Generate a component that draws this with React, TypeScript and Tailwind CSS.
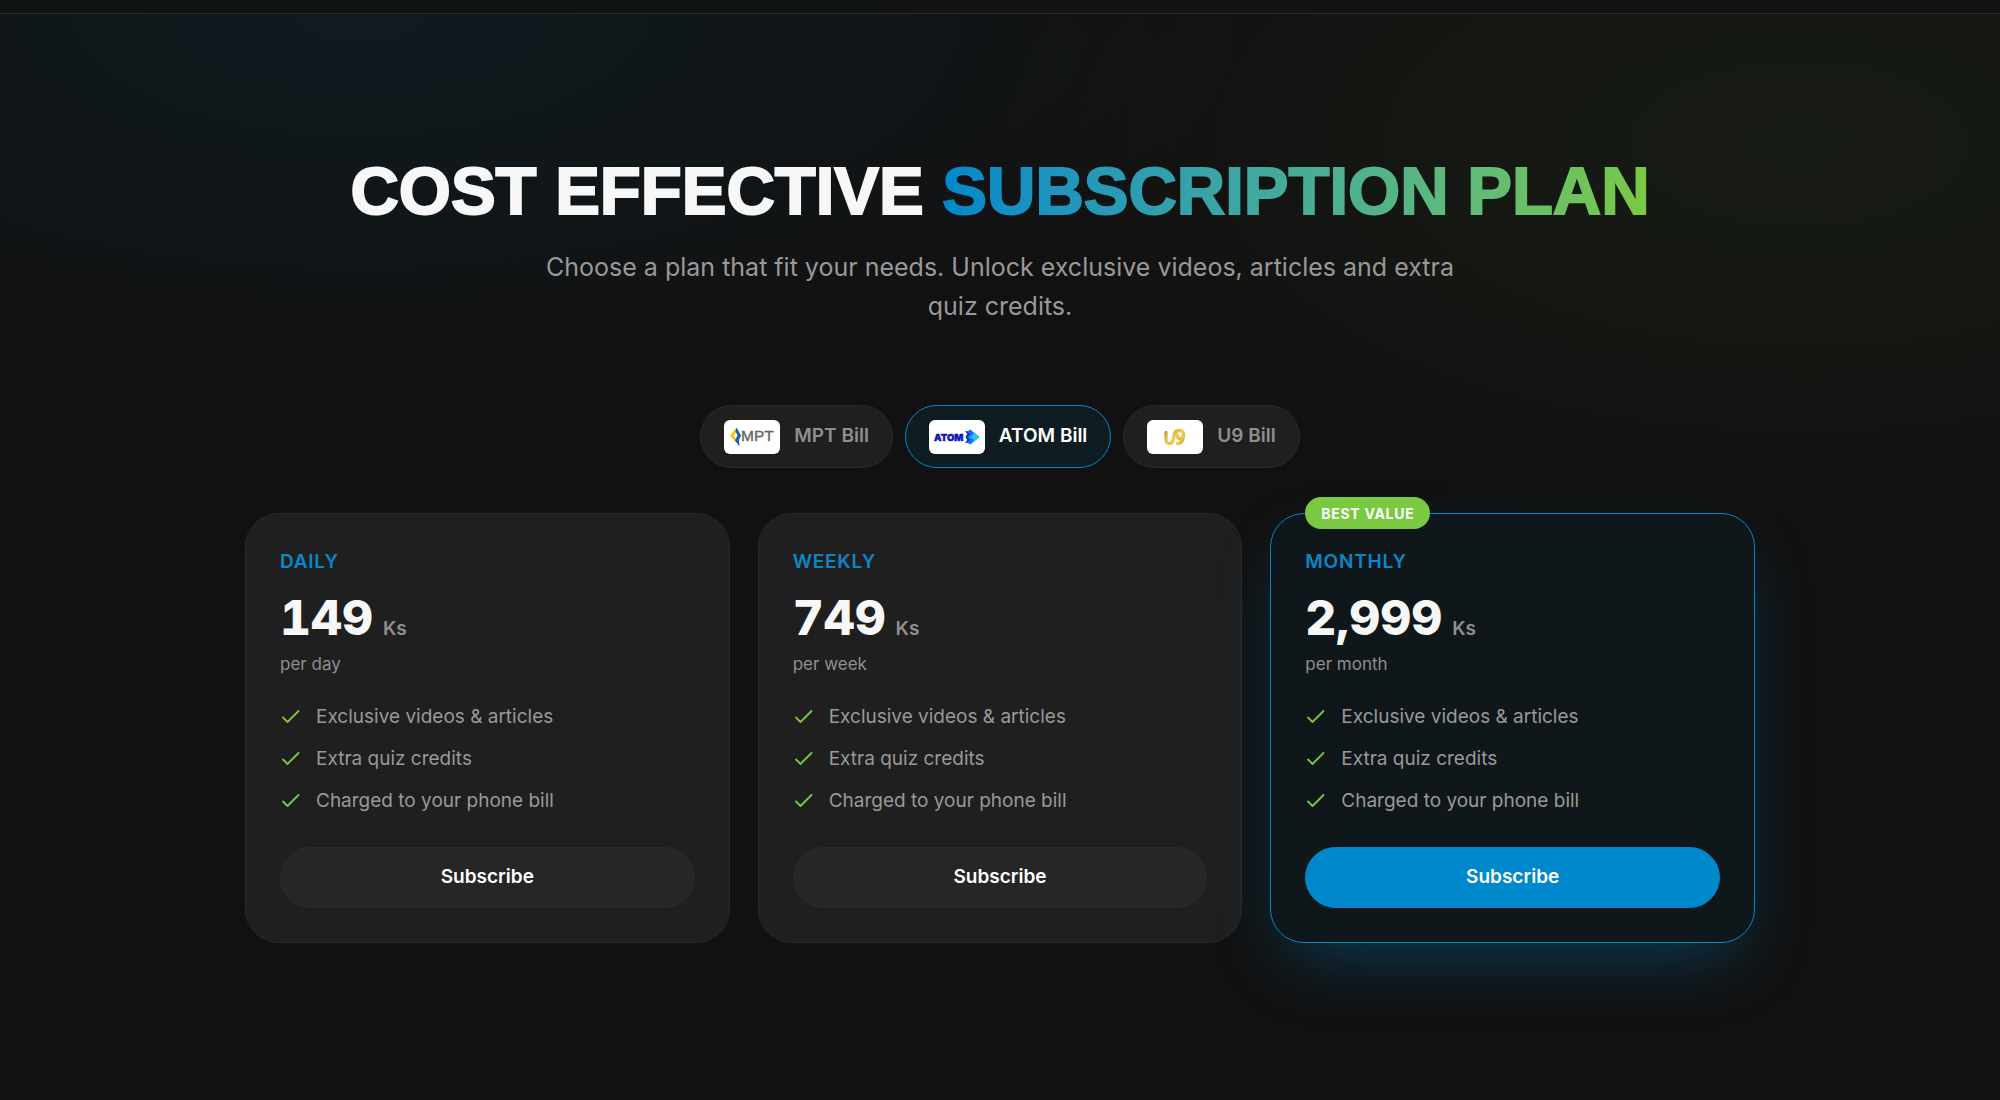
import React, { useState } from 'react';

const FEATURES = ['Exclusive videos & articles', 'Extra quiz credits', 'Charged to your phone bill'];

const PLANS = [
  { name: 'Daily', price: '149', period: 'per day', best: false },
  { name: 'Weekly', price: '749', period: 'per week', best: false },
  { name: 'Monthly', price: '2,999', period: 'per month', best: true },
];

const MptLogo = () => (
  <svg viewBox="0 0 56 34" className="w-full h-full" aria-hidden="true">
    <path d="M12.500 7.500 L6 15.500 L11.500 22 L13 19.500 L9.500 15.500 L13 11.500 Z" fill="#f5c518" />
    <path d="M12.500 7.500 L17 15.500 L15 20 L15.500 26.500 L11 20.500 L13.500 15.500 L11.500 11 Z" fill="#1b62a5" />
    <text x="17" y="21" fontFamily="Liberation Sans" fontWeight="400" fontSize="15.5" fill="#666" stroke="#666" strokeWidth="0.4">MPT</text>
  </svg>
);

const AtomLogo = () => (
  <svg viewBox="0 0 56 34" className="w-full h-full" aria-hidden="true">
    <text x="5" y="20.500" fontFamily="Inter" fontWeight="900" fontSize="9.500" fill="#0a14b4" stroke="#0a14b4" strokeWidth="0.4">ATOM</text>
    <path d="M36 11 L39 11 L41 9.500 L44 11.500 L50.500 17 L44 22.500 L41 24.500 L39 23 L36 23 L38.500 20 L36.500 17 L38.500 14 Z" fill="#1d6ff2" />
    <path d="M42 10.500 L50.500 17 L42 24 L45 20 L40.500 17 L45 14 Z" fill="#29c5f6" />
    <path d="M36 11 L41 14 L38 17 L41 20 L36 23 L38.500 20 L36.500 17 L38.500 14 Z" fill="#0a1fc4" />
  </svg>
);

const U9Logo = () => (
  <svg viewBox="0 0 56 34" className="w-full h-full" aria-hidden="true">
    <defs>
      <linearGradient id="gold" x1="0" y1="0" x2="1" y2="1">
        <stop offset="0" stopColor="#c99a2a" />
        <stop offset="0.5" stopColor="#f0cf55" />
        <stop offset="1" stopColor="#cf9f2c" />
      </linearGradient>
    </defs>
    <g fill="none" stroke="url(#gold)" strokeWidth="3.4" strokeLinecap="round" strokeLinejoin="round">
      <path d="M19 12.500 V19.500 C19 22 20.500 23.500 22.500 23.500 C26 23.500 26.500 19 27 15.500 C27.500 12 30 10.500 32.500 10.500 C35.500 10.500 37 12.500 36.500 15 C36 17.500 34 19 32 18.500 C30.500 18 30 16.500 30.500 15" />
      <path d="M36.500 15 C36 20 34 23.500 30.500 23.500" />
    </g>
  </svg>
);

const OPERATORS = [
  { id: 'mpt', label: 'MPT Bill', logo: MptLogo },
  { id: 'atom', label: 'ATOM Bill', logo: AtomLogo },
  { id: 'u9', label: 'U9 Bill', logo: U9Logo },
];

const Check = () => (
  <svg viewBox="0 0 22 22" className="w-[22px] h-[22px] shrink-0" fill="none" stroke="#7ac943" strokeWidth="1.8" strokeLinecap="round" strokeLinejoin="round" aria-hidden="true">
    <path d="M3 11.500 L7.500 16 L18.500 5" />
  </svg>
);

const PlanCard = ({ plan }: { plan: typeof PLANS[number] }) => (
  <article
    className={`relative rounded-[34px] border p-[34px] ${
      plan.best
        ? 'bg-[#10171a] border-[#0b84c4] shadow-[0_28px_70px_-20px_rgba(0,136,204,0.4)]'
        : 'bg-[#1f1f1f] border-[#2a2a2a]'
    }`}
  >
    {plan.best && (
      <span className="absolute -top-[17px] left-[34px] rounded-full bg-[#7ac943] px-4 h-8 flex items-center text-[14px] font-bold tracking-[0.05em] text-white">
        BEST VALUE
      </span>
    )}
    <h2 className="text-[19px] leading-7 font-semibold uppercase tracking-[0.04em] text-[#0a87c8]">{plan.name}</h2>
    <p className="mt-3 flex items-baseline gap-[10px]">
      <span className="text-[48px] leading-[60px] font-extrabold tabular-nums text-[#f7f7f7]">{plan.price}</span>
      <span className="text-[19px] font-semibold text-[#8f8f8f]">Ks</span>
    </p>
    <p className="mt-1 text-[17px] leading-6 text-[#8f8f8f]">{plan.period}</p>
    <ul className="mt-[26px] flex flex-col gap-3">
      {FEATURES.map((feature) => (
        <li key={feature} className="flex items-center gap-[14px] text-[19px] leading-[30px] text-[#999]">
          <Check />
          {feature}
        </li>
      ))}
    </ul>
    <button
      type="button"
      className={`mt-[31px] w-full h-[61px] rounded-full border text-[19px] font-semibold text-white ${
        plan.best ? 'bg-[#0088cc] border-[#0088cc]' : 'bg-[#262626] border-[#2b2b2b]'
      }`}
    >
      Subscribe
    </button>
  </article>
);

export default function App() {
  const [operator, setOperator] = useState('atom');

  return (
    <div className="min-h-screen flex flex-col bg-[#111] font-['Inter',sans-serif]">
      <header className="h-[14px] border-b border-[#2a2c2d] bg-[#121313]" />
      <main className="flex-1 px-10 pt-[142px] pb-20 bg-[radial-gradient(ellipse_900px_380px_at_18%_0%,rgba(0,136,204,0.08),transparent),radial-gradient(ellipse_820px_400px_at_90%_12%,rgba(122,201,67,0.06),transparent)]">
        <h1 className="text-center font-['Liberation_Sans',sans-serif] text-[67px] leading-[70px] font-bold text-[#f7f7f7] [-webkit-text-stroke:2px]">
          COST EFFECTIVE{' '}
          <span className="bg-gradient-to-r from-[#0088cc] to-[#7ac943] bg-clip-text text-transparent">SUBSCRIPTION PLAN</span>
        </h1>
        <p className="mt-[22px] mx-auto max-w-[940px] text-center text-[25px] leading-[39px] text-[#999]">
          Choose a plan that fit your needs. Unlock exclusive videos, articles and extra quiz credits.
        </p>

        <div className="mt-[79px] flex flex-wrap justify-center gap-3">
          {OPERATORS.map((op) => (
            <button
              key={op.id}
              type="button"
              aria-pressed={operator === op.id}
              onClick={() => setOperator(op.id)}
              className={`h-[63px] px-[23px] rounded-full border flex items-center gap-[14px] text-[19px] font-semibold ${
                operator === op.id
                  ? 'bg-[#0f1c22] border-[#0b84c4] text-white'
                  : 'bg-[#1f1f1f] border-[#2a2a2a] text-[#8f8f8f]'
              }`}
            >
              <span className="w-14 h-[34px] rounded-md bg-white overflow-hidden">
                <op.logo />
              </span>
              {op.label}
            </button>
          ))}
        </div>

        <div className="mt-[45px] mx-auto max-w-[1510px] grid grid-cols-1 lg:grid-cols-3 gap-7">
          {PLANS.map((plan) => (
            <PlanCard key={plan.name} plan={plan} />
          ))}
        </div>
      </main>
    </div>
  );
}
